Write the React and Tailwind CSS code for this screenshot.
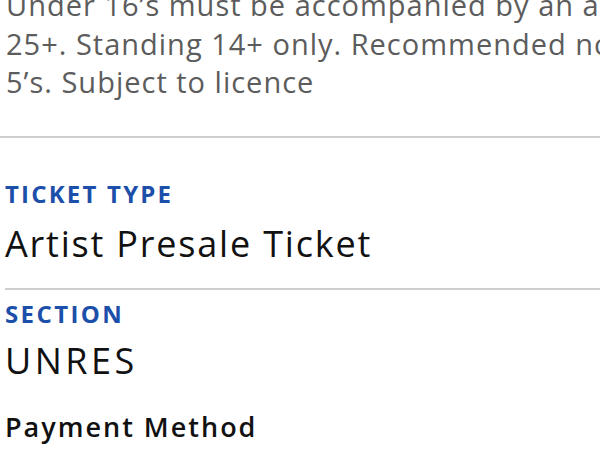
export default function App() {
  return (
    <div className="w-[600px] h-[450px] overflow-hidden bg-white font-['Open_Sans',sans-serif]">
      <p className="-mt-[14px] pl-[6px] text-[29px] leading-[38.5px] tracking-[1px] text-[#5c5c5c] whitespace-nowrap">
        Under 16’s must be accompanied by an adult aged
        <br />
        25+. Standing 14+ only. Recommended not suitable for under
        <br />
        5’s. Subject to licence
      </p>

      <div className="mt-[34px] h-[2px] bg-[#cfcfcf]" />

      <div className="pl-[5px]">
        <div className="pt-[44px] text-[24px] leading-[24px] tracking-[2.2px] font-bold text-[#1c4fa9]">TICKET TYPE</div>
        <div className="mt-[20px] text-[36px] leading-[36px] tracking-[1.8px] text-[#111]">Artist Presale Ticket</div>
        <div className="mt-[26px] h-[2px] bg-[#cfcfcf]" />
        <div className="pt-[12px] text-[24px] leading-[24px] tracking-[2.4px] font-bold text-[#1c4fa9]">SECTION</div>
        <div className="mt-[17px] text-[36px] leading-[36px] tracking-[3.5px] text-[#111]">UNRES</div>
        <h3 className="mt-[34px] text-[27px] leading-[27px] tracking-[2px] font-semibold text-[#111]">Payment Method</h3>
      </div>
    </div>
  );
}
